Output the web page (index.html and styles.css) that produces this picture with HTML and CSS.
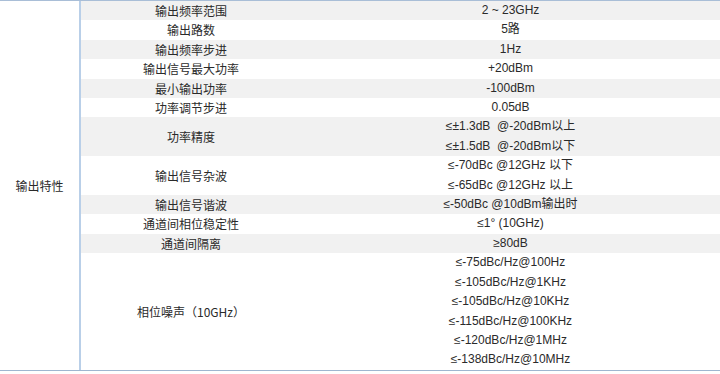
FILE: index.html
```html
<!DOCTYPE html>
<html lang="zh-CN">
<head>
<meta charset="utf-8">
<title>输出特性</title>
<link rel="stylesheet" href="styles.css">
</head>
<body>
<table class="spec">
  <tbody>
    <tr>
      <td class="group" rowspan="12">输出特性</td>
      <td class="name">输出频率范围</td>
      <td class="val">2 ~ 23GHz</td>
    </tr>
    <tr>
      <td class="name">输出路数</td>
      <td class="val">5路</td>
    </tr>
    <tr>
      <td class="name">输出频率步进</td>
      <td class="val">1Hz</td>
    </tr>
    <tr>
      <td class="name">输出信号最大功率</td>
      <td class="val">+20dBm</td>
    </tr>
    <tr>
      <td class="name">最小输出功率</td>
      <td class="val">-100dBm</td>
    </tr>
    <tr>
      <td class="name">功率调节步进</td>
      <td class="val">0.05dB</td>
    </tr>
    <tr>
      <td class="name">功率精度</td>
      <td class="val">≤±1.3dB &nbsp;@-20dBm以上<br>≤±1.5dB &nbsp;@-20dBm以下</td>
    </tr>
    <tr>
      <td class="name">输出信号杂波</td>
      <td class="val">≤-70dBc @12GHz 以下<br>≤-65dBc @12GHz 以上</td>
    </tr>
    <tr>
      <td class="name">输出信号谐波</td>
      <td class="val">≤-50dBc @10dBm输出时</td>
    </tr>
    <tr>
      <td class="name">通道间相位稳定性</td>
      <td class="val">≤1° (10GHz)</td>
    </tr>
    <tr>
      <td class="name">通道间隔离</td>
      <td class="val">≥80dB</td>
    </tr>
    <tr>
      <td class="name">相位噪声（10GHz）</td>
      <td class="val">≤-75dBc/Hz@100Hz<br>≤-105dBc/Hz@1KHz<br>≤-105dBc/Hz@10KHz<br>≤-115dBc/Hz@100KHz<br>≤-120dBc/Hz@1MHz<br>≤-138dBc/Hz@10MHz</td>
    </tr>
  </tbody>
</table>
</body>
</html>
```

FILE: styles.css
```css
html, body {
  margin: 0;
  padding: 0;
  background: #ffffff;
}

body {
  font-family: "Liberation Sans", "Noto Sans CJK SC", sans-serif;
  font-size: 12px;
  color: #2a2a2a;
}

.spec {
  width: 720px;
  table-layout: fixed;
  border-collapse: separate;
  border-spacing: 0;
  border-top: 1px solid #a9bed7;
  border-bottom: 1px solid #9fb6d0;
  box-shadow: 0 1px 0 #dfe8f3;
}

.spec td {
  padding: 0;
  line-height: 19.4px;
  vertical-align: middle;
  text-align: center;
  white-space: nowrap;
}

.spec tr:nth-child(odd) .name,
.spec tr:nth-child(odd) .val {
  background: #f1f1f1;
}

.group {
  width: 79px;
  background: #ffffff;
  border-right: 2px solid #b9cfe8;
  font-family: "Noto Sans CJK SC", sans-serif;
}

.name {
  width: 220px;
  font-family: "Noto Sans CJK SC", sans-serif;
}

.val {
  width: auto;
}
```
